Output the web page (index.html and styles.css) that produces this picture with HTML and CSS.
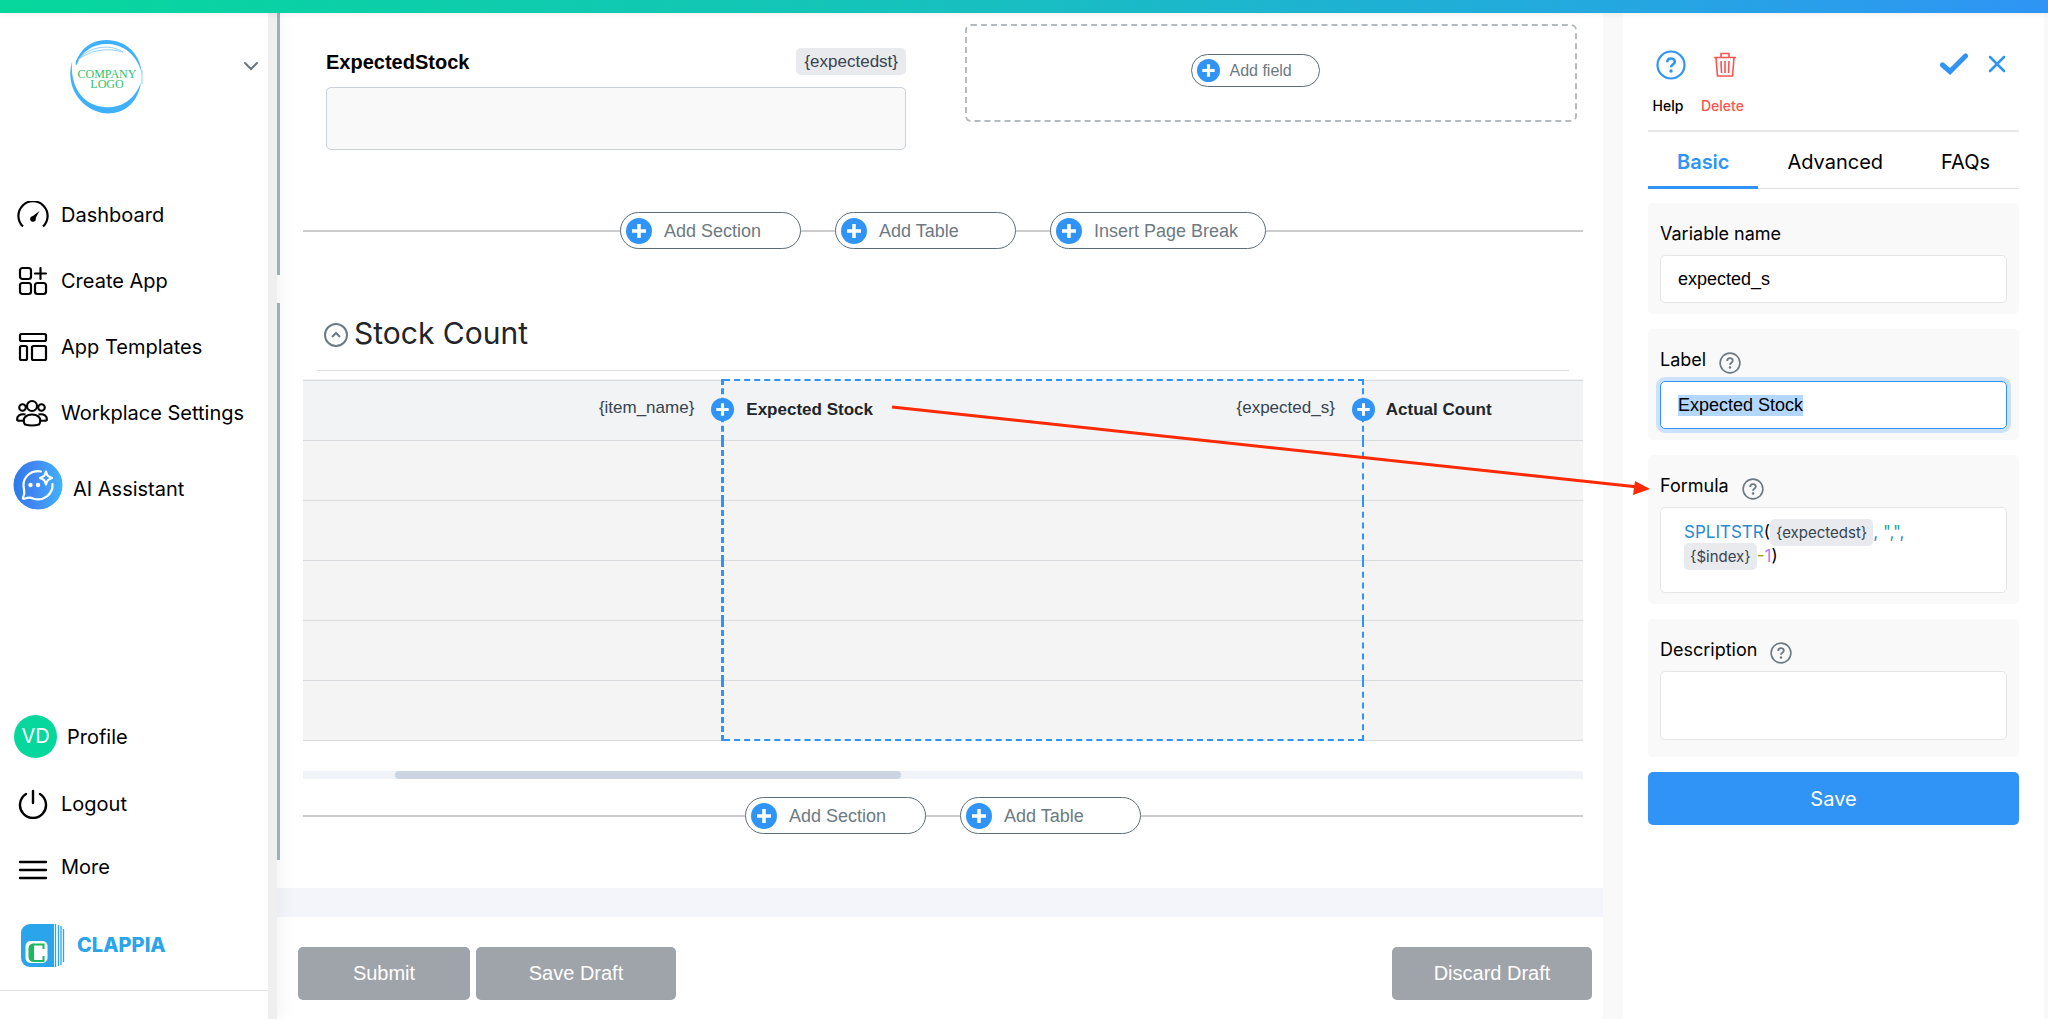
FILE: index.html
```html
<!DOCTYPE html>
<html lang="en">
<head>
    <meta charset="UTF-8">
    <meta name="viewport" content="width=device-width, initial-scale=1.0">
    <title>Clappia - Design App</title>
    <link rel="stylesheet" href="styles.css">
</head>
<body>
    <!-- shared icons -->
    <svg class="sprite" aria-hidden="true">
        <symbol id="plus" viewBox="0 0 26 26">
            <circle cx="13" cy="13" r="13" fill="#2f94f5"/>
            <path d="M13 6v14M6 13h14" stroke="#fff" stroke-width="3.500"/>
        </symbol>
        <symbol id="help" viewBox="0 0 30 30">
            <circle cx="15" cy="15" r="13.5" fill="none" stroke="currentColor" stroke-width="2.200"/>
            <path d="M11.2 12.2c0-5 7.6-4.9 7.6-.5 0 2.8-3.8 2.9-3.8 5.6" fill="none" stroke="currentColor" stroke-width="2.500"/>
            <circle cx="15" cy="21" r="1.7" fill="currentColor"/>
        </symbol>
    </svg>

    <div class="topbar"></div>
    <div class="layout">
        <aside class="sidebar">
            <div class="workplace">
                <svg class="company-logo" width="74" height="74" viewBox="0 0 74 74">
                    <path d="M37 0C58 0 72 15 73 35C70 18 57 5 40 4C25 3 13 11 8 24C7 26 6 25 7 21C12 9 22 0 37 0Z" fill="#3fb1fc"/>
                    <path d="M3 22C-3 42 7 67 33 73C52 76 69 65 72 42C66 60 51 69 35 67C14 65 1 47 3 22Z" fill="#3fb1fc"/>
                    <path d="M9 20C19 7 40 3 54 12C39 8 22 9 9 20ZM73 30v14" fill="none" stroke="#8fd0fc"/>
                    <text x="38" y="38" text-anchor="middle">COMPANY</text>
                    <text x="38" y="48" text-anchor="middle">LOGO</text>
                </svg>
                <button type="button" class="icon-button" aria-label="Switch workplace">
                    <svg width="16" height="10" viewBox="0 0 16 10"><path d="M2 2l6 6 6-6" fill="none" stroke="#66757f" stroke-width="2" stroke-linecap="round"/></svg>
                </button>
            </div>
            <nav class="menu">
                <a href="#" class="menu-item">
                    <svg width="34" height="28" viewBox="0 0 34 28" fill="none" stroke="#000" stroke-width="2">
                        <path d="M7 25.5A14.6 14.6 0 1 1 27 25.5" stroke-width="2.2"/>
                        <path d="M23.5 10L15.5 16l3 3z" fill="#000" stroke="none"/>
                        <circle cx="17" cy="18" r="2.8" fill="#000" stroke="none"/>
                    </svg>
                    Dashboard
                </a>
                <a href="#" class="menu-item">
                    <svg width="34" height="30" viewBox="0 0 34 30" fill="none" stroke="#000" stroke-width="2.2" stroke-linecap="round">
                        <rect x="4" y="2" width="11" height="11" rx="2.5"/>
                        <rect x="4" y="17" width="11" height="11" rx="2.5"/>
                        <rect x="19" y="17" width="11" height="11" rx="2.5"/>
                        <path d="M24.500 2v11M19 7.500h11"/>
                    </svg>
                    Create App
                </a>
                <a href="#" class="menu-item">
                    <svg width="34" height="30" viewBox="0 0 34 30" fill="none" stroke="#000" stroke-width="2.2">
                        <rect x="4" y="2" width="26" height="7" rx="1.500"/>
                        <rect x="4" y="14" width="7" height="14" rx="1.500"/>
                        <rect x="16" y="14" width="14" height="14" rx="1.500"/>
                    </svg>
                    App Templates
                </a>
                <a href="#" class="menu-item">
                    <svg width="34" height="28" viewBox="0 0 34 28" fill="none" stroke="#000" stroke-width="2.1">
                        <circle cx="16" cy="7" r="5"/>
                        <circle cx="6.500" cy="8.500" r="3.300"/>
                        <circle cx="25.500" cy="8.500" r="3.300"/>
                        <path d="M9 25.500C5 19 11 15.500 16 15.500S27 19 23 25.500Q16 27.500 9 25.500Z"/>
                        <path d="M8.500 21.500C5 22 2 22 1.200 21C.5 17 4 14.500 9.500 15.500M23.500 21.500C27 22 30 22 30.800 21C31.500 17 28 14.500 22.500 15.500"/>
                    </svg>
                    Workplace Settings
                </a>
                <a href="#" class="menu-item assistant">
                    <svg width="50" height="50" viewBox="0 0 50 50" fill="none" stroke="#fff" stroke-width="2.2" stroke-linejoin="round" stroke-linecap="round">
                        <defs><linearGradient id="ai"><stop offset="0" stop-color="#2c7ae8"/><stop offset=".4" stop-color="#4287f3"/><stop offset="1" stop-color="#40b3fb"/></linearGradient></defs>
                        <circle cx="25" cy="25" r="24.500" fill="url(#ai)" stroke="none"/>
                        <path d="M28 11.500C18 9.500 10.500 17 10.500 25C10.500 31 13 32 10 37.500C9.500 39 11 39 12 38.500C15 37.500 17 37 20 38.500C30 42 40.500 34 39.500 24"/>
                        <path d="M33 11.500c1 4 2 5 6 6.500c-4 1.500-5 2.500-6 6.500c-1-4-2-5-6-6.500c4-1.500 5-2.500 6-6.500z"/>
                        <circle cx="17.500" cy="25" r="2.200" fill="#fff" stroke="none"/>
                        <circle cx="25" cy="25" r="2.200" fill="#fff" stroke="none"/>
                    </svg>
                    <span>AI Assistant</span>
                </a>
            </nav>
            <nav class="menu account">
                <a href="#" class="menu-item profile"><span class="avatar">VD</span>Profile</a>
                <a href="#" class="menu-item">
                    <svg width="34" height="30" viewBox="0 0 34 30" fill="none" stroke="#000" stroke-width="2.400" stroke-linecap="round">
                        <path d="M10 5A13 13 0 1 0 24 5M17 2v12"/>
                    </svg>
                    Logout
                </a>
                <a href="#" class="menu-item more">
                    <svg width="34" height="24" viewBox="0 0 34 24" stroke="#000" stroke-width="2.400" stroke-linecap="round"><path d="M4 5h26M4 13h26M4 21h26"/></svg>
                    <span>More</span>
                </a>
            </nav>
            <a href="#" class="brand">
                <svg width="45" height="45" viewBox="0 0 45 45">
                    <path d="M10 1h24v43H10a9 9 0 0 1-9-9V10a9 9 0 0 1 9-9z" fill="#2aa4ea"/>
                    <path d="M35.500 1v43M38.500 2v41M41 3v39M43.500 6v33" stroke="#2aa4ea" stroke-width="1.300"/>
                    <rect x="5.500" y="18" width="22" height="22" rx="5" fill="#fff"/>
                    <path d="M23.500 26v-4.500H13.500q-4 1-4 4v8q0 4 4 4.500h10V33" fill="none" stroke="#1cba60" stroke-width="2"/>
                    <path d="M9 24q0-3 5-3.500v18q-5-.5-5-3.500z" fill="#1cba60"/>
                </svg>
                CLAPPIA
            </a>
        </aside>

        <main class="designer">
            <section class="form-section">
                <div class="fields">
                    <div class="field">
                        <div class="field-head">
                            <label for="expectedst">ExpectedStock</label>
                            <span class="variable">{expectedst}</span>
                        </div>
                        <input type="text" id="expectedst" class="field-input" readonly>
                    </div>
                    <div class="drop-zone">
                        <button type="button" class="pill small"><svg><use href="#plus"/></svg>Add field</button>
                    </div>
                </div>
                <div class="insert-row">
                    <button type="button" class="pill"><svg><use href="#plus"/></svg>Add Section</button>
                    <button type="button" class="pill"><svg><use href="#plus"/></svg>Add Table</button>
                    <button type="button" class="pill"><svg><use href="#plus"/></svg>Insert Page Break</button>
                </div>
            </section>

            <section class="form-section">
                <div class="section-title">
                    <svg width="24" height="24" viewBox="0 0 24 24" fill="none" stroke="#6c7a83" stroke-width="2"><circle cx="12" cy="12" r="11"/><path d="M8 14l4-4 4 4"/></svg>
                    <h2>Stock Count</h2>
                </div>
                <table class="stock-table">
                    <colgroup><col class="col-item"><col class="col-expected"><col></colgroup>
                    <thead>
                        <tr>
                            <th>
                                <div class="column-head"><span class="code">{item_name}</span></div>
                                <button type="button" class="add-column" aria-label="Add column"><svg><use href="#plus"/></svg></button>
                            </th>
                            <th class="selected">
                                <div class="column-head">Expected Stock <span class="code">{expected_s}</span></div>
                                <button type="button" class="add-column" aria-label="Add column"><svg><use href="#plus"/></svg></button>
                            </th>
                            <th><div class="column-head">Actual Count</div></th>
                        </tr>
                    </thead>
                    <tbody>
                        <tr><td></td><td class="selected"></td><td></td></tr>
                        <tr><td></td><td class="selected"></td><td></td></tr>
                        <tr><td></td><td class="selected"></td><td></td></tr>
                        <tr><td></td><td class="selected"></td><td></td></tr>
                        <tr><td></td><td class="selected"></td><td></td></tr>
                    </tbody>
                </table>
                <div class="scroll-track"><div class="scroll-thumb"></div></div>
                <div class="insert-row">
                    <button type="button" class="pill"><svg><use href="#plus"/></svg>Add Section</button>
                    <button type="button" class="pill"><svg><use href="#plus"/></svg>Add Table</button>
                </div>
            </section>

            <div class="band"></div>
            <div class="form-actions">
                <button type="button">Submit</button>
                <button type="button" class="wide">Save Draft</button>
                <button type="button" class="wide discard">Discard Draft</button>
            </div>
        </main>

        <aside class="panel">
            <div class="panel-tools">
                <button type="button" class="tool">
                    <svg width="30" height="30"><use href="#help"/></svg>
                    <span>Help</span>
                </button>
                <button type="button" class="tool delete">
                    <svg width="24" height="30" viewBox="0 0 24 30" fill="none" stroke="currentColor" stroke-width="1.600">
                        <path d="M1 7.500h22M8 7V3.500h8V7M3 8l1.500 18h15L21 8M8 11l.5 12M12 11v12M16 11l-.5 12"/>
                    </svg>
                    <span>Delete</span>
                </button>
                <button type="button" class="icon-button confirm" aria-label="Apply">
                    <svg width="28" height="22" viewBox="0 0 28 22"><path d="M2.500 12l7.500 6.500L25.500 3" fill="none" stroke="#2f94f5" stroke-width="5" stroke-linecap="round"/></svg>
                </button>
                <button type="button" class="icon-button" aria-label="Close">
                    <svg width="18" height="18" viewBox="0 0 18 18"><path d="M2 2l14 14M16 2L2 16" stroke="#2f94f5" stroke-width="2.500" stroke-linecap="round"/></svg>
                </button>
            </div>
            <div class="tabs">
                <button type="button" class="tab active">Basic</button>
                <button type="button" class="tab">Advanced</button>
                <button type="button" class="tab">FAQs</button>
            </div>
            <form class="settings">
                <div class="card">
                    <div class="card-label"><label for="variable">Variable name</label></div>
                    <input type="text" id="variable" value="expected_s">
                </div>
                <div class="card">
                    <div class="card-label"><label for="label">Label</label><svg><use href="#help"/></svg></div>
                    <input type="text" id="label" class="focused" value="Expected Stock">
                </div>
                <div class="card">
                    <div class="card-label"><span id="formula-label">Formula</span><svg><use href="#help"/></svg></div>
                    <div class="formula" role="textbox" aria-labelledby="formula-label"><span class="fn">SPLITSTR</span>(<span class="variable">{expectedst}</span><span class="fn">,</span> <span class="str">","</span><span class="fn">,</span><br><span class="variable">{$index}</span><span class="op">-</span><span class="num">1</span>)</div>
                </div>
                <div class="card tall">
                    <div class="card-label"><label for="description">Description</label><svg><use href="#help"/></svg></div>
                    <textarea id="description"></textarea>
                </div>
                <button type="submit" class="save">Save</button>
            </form>
            <!-- pointer from the selected column to its formula -->
            <svg class="pointer" width="760" height="94" viewBox="0 0 760 94">
                <path d="M2 6L748 86" stroke="#ff2a05" stroke-width="3"/>
                <path d="M760 88l-15-8-2 14z" fill="#ff2a05"/>
            </svg>
        </aside>
    </div>

    <script>
        const labelInput = document.getElementById('label');
        labelInput.focus();
        labelInput.select();
    </script>
</body>
</html>
```
FILE: styles.css
```css
* {
    box-sizing: border-box;
}

body {
    margin: 0;
    min-height: 100vh;
    display: flex;
    flex-direction: column;
    font-family: 'Inter', sans-serif;
    font-size: 20px;
    color: #000;
    background-color: #f9f9f9;
}

button {
    font-family: inherit;
    cursor: pointer;
}

.sprite {
    position: absolute;
    width: 0;
    height: 0;
}

.topbar {
    position: relative;
    z-index: 3;
    height: 13px;
    background: linear-gradient(to right, #06d79c, #14c5b8 40%, #22abdc 75%, #2f94f5);
    box-shadow: 0 1px 6px rgba(0, 0, 0, 0.08);
}

.layout {
    flex: 1;
    display: flex;
}

.icon-button {
    display: flex;
    padding: 0;
    border: none;
    background: none;
}

/* sidebar */
.sidebar {
    position: relative;
    z-index: 2;
    flex: none;
    width: 277px;
    background-color: #fff;
    border-right: 9px solid #efefef;
    box-shadow: 2px 0 18px rgba(0, 0, 0, 0.06);
}

.workplace {
    display: flex;
    justify-content: space-between;
    height: 169px;
    padding: 27px 9px 0 69px;
}

.workplace .icon-button {
    height: 10px;
    margin-top: 21px;
}

.company-logo text {
    font-family: 'Liberation Serif', serif;
    font-size: 12px;
    fill: #2fc26b;
}

.menu {
    display: flex;
    flex-direction: column;
}

.menu-item {
    display: flex;
    align-items: center;
    gap: 11px;
    height: 66px;
    padding-left: 16px;
    color: #000;
    text-decoration: none;
}

.assistant {
    gap: 10px;
    height: 78px;
    padding-left: 13px;
}

.assistant span {
    padding-top: 7px;
}

.account {
    margin-top: 178px;
}

.profile {
    gap: 10px;
    height: 69px;
    padding-left: 14px;
}

.more {
    height: 63px;
}

.more span {
    padding-bottom: 4px;
}

.avatar {
    width: 43px;
    height: 43px;
    border-radius: 50%;
    background-color: #06d79c;
    color: #fff;
    line-height: 43px;
    text-align: center;
}

.brand {
    display: flex;
    align-items: center;
    gap: 12px;
    height: 91px;
    padding-left: 20px;
    border-bottom: 1px solid #e2e2e2;
    color: #2aa4ea;
    font-weight: 800;
    text-decoration: none;
}

/* form designer */
.designer {
    flex: 1;
    min-width: 0;
    background-color: #fff;
    font-family: 'Liberation Sans', sans-serif;
}

.form-section {
    margin-bottom: 28px;
    padding: 0 20px 26px 23px;
    border-left: 3px solid #a3b5bc;
}

.fields {
    display: grid;
    grid-template-columns: 580fr 612fr;
    gap: 59px;
    padding: 11px 6px 0 23px;
}

.field {
    padding-top: 24px;
}

.field-head {
    display: flex;
    justify-content: space-between;
    align-items: center;
    height: 27px;
    margin-bottom: 12px;
    font-weight: bold;
}

.field-head label {
    padding-top: 2px;
}

.variable {
    padding: 0 8px;
    border-radius: 5px;
    background-color: #e9eaee;
    color: #37444f;
    font-size: 17px;
    font-weight: normal;
    line-height: 27px;
}

.field-input {
    display: block;
    width: 100%;
    height: 63px;
    border: 1px solid #cbd2da;
    border-radius: 5px;
    background-color: #f9f9f9;
}

.drop-zone {
    display: flex;
    justify-content: center;
    align-items: center;
    height: 98px;
    padding: 0 32px 6px 0;
    border: 2px dashed #b4babd;
    border-radius: 6px;
}

.insert-row {
    display: flex;
    justify-content: center;
    gap: 34px;
    margin-top: 62px;
    background: linear-gradient(#ccc, #ccc) center / 100% 2px no-repeat;
}

.pill {
    display: flex;
    align-items: center;
    gap: 12px;
    min-width: 181px;
    height: 37px;
    padding: 1px 27px 0 5px;
    border: 1px solid #5f6d76;
    border-radius: 19px;
    background-color: #fff;
    color: #6c7a83;
    font-size: 18px;
}

.pill svg {
    width: 26px;
    height: 26px;
}

.pill.small {
    gap: 10px;
    min-width: 129px;
    height: 33px;
    padding-right: 26px;
    font-size: 16px;
}

.pill.small svg {
    width: 23px;
    height: 23px;
}

.section-title {
    display: flex;
    align-items: center;
    gap: 6px;
    height: 68px;
    margin: 0 14px 8px;
    padding: 0 7px 4px;
    border-bottom: 1px solid #e2e2e2;
}

.section-title h2 {
    margin: 0;
    padding-bottom: 4px;
    font-family: 'Inter', sans-serif;
    font-size: 30px;
    font-weight: normal;
    color: #212529;
}

.stock-table {
    width: 100%;
    table-layout: fixed;
    border-collapse: collapse;
    background-color: #f4f4f4;
}

.col-item {
    width: 32.8%;
}

.col-expected {
    width: 50%;
}

.stock-table tr {
    height: 60px;
}

.stock-table th,
.stock-table td {
    padding: 0;
    border-top: 1px solid #d8dade;
    border-bottom: 1px solid #d8dade;
}

.stock-table th {
    position: relative;
    background-color: #f1f3f5;
    color: #212529;
    font-size: 17px;
}

.stock-table .selected {
    border-left: 3px dashed #2f94f5;
    border-right: 2px dashed #2f94f5;
}

.stock-table th.selected {
    border-top: 2px dashed #2f94f5;
}

.stock-table tr:last-child td.selected {
    border-bottom: 2px dashed #2f94f5;
}

.column-head {
    display: flex;
    justify-content: space-between;
    align-items: center;
    padding: 0 27px 0 22px;
}

.code {
    margin-left: auto;
    padding-bottom: 4px;
    color: #37444f;
    font-weight: normal;
}

.add-column {
    position: absolute;
    top: 17px;
    right: -13px;
    z-index: 1;
    display: flex;
    padding: 0;
    border: none;
    background: none;
}

.add-column svg {
    width: 23px;
    height: 23px;
}

.scroll-track {
    height: 8px;
    margin-top: 30px;
    background-color: #f0f4f9;
}

.scroll-thumb {
    width: 506px;
    height: 8px;
    margin-left: 92px;
    border-radius: 4px;
    background-color: #cbd5e1;
}

.scroll-track + .insert-row {
    margin-top: 18px;
}

.band {
    height: 29px;
    background-color: #f4f5fa;
}

.form-actions {
    display: flex;
    gap: 6px;
    padding: 30px 11px 18px 21px;
}

.form-actions button {
    width: 172px;
    height: 53px;
    border: none;
    border-radius: 5px;
    background-color: #9fa3aa;
    color: #fff;
    font-size: 20px;
}

.form-actions .wide {
    width: 200px;
}

.form-actions .discard {
    margin-left: auto;
}

/* settings panel */
.panel {
    position: relative;
    flex: none;
    width: 421px;
    margin: 0 4px 0 20px;
    padding: 0 25px;
    background-color: #fff;
}

.panel-tools {
    display: flex;
    gap: 15px;
    height: 119px;
    padding: 37px 13px 0 2px;
    border-bottom: 2px solid #e8e8e8;
}

.panel-tools .icon-button {
    align-items: center;
    height: 28px;
}

.panel-tools .confirm {
    margin-left: auto;
    margin-right: 5px;
}

.tool {
    display: flex;
    flex-direction: column;
    align-items: center;
    gap: 17px;
    height: 70px;
    padding: 0;
    border: none;
    background: none;
    font-size: 14px;
    font-weight: 500;
}

.tool svg {
    margin-left: 6px;
    color: #2f94f5;
}

.tool.delete,
.tool.delete svg {
    color: #f9544f;
}

.tabs {
    display: flex;
    height: 57px;
    border-bottom: 1px solid #dedfe1;
}

.tab {
    flex: auto;
    height: 57px;
    padding: 5px 28px 0;
    border: none;
    border-bottom: 3px solid transparent;
    background: none;
    font-size: 20px;
}

.tab.active {
    border-color: #2f94f5;
    color: #2f94f5;
    font-weight: 600;
}

.settings {
    display: flex;
    flex-direction: column;
    gap: 15px;
    padding-top: 14px;
}

.card {
    padding: 12px 12px 11px;
    border-radius: 5px;
    background-color: #f9f9f9;
}

.card.tall {
    padding-bottom: 17px;
}

.card-label {
    display: flex;
    align-items: center;
    gap: 13px;
    height: 39px;
    margin-bottom: 1px;
    padding-bottom: 2px;
    font-size: 18px;
}

.card-label svg {
    width: 22px;
    height: 22px;
    margin-top: 6px;
    color: #6c7a83;
}

.card input,
.card textarea,
.formula {
    display: block;
    width: 100%;
    height: 48px;
    padding: 0 17px;
    border: 1px solid #e4e5e7;
    border-radius: 5px;
    background-color: #fff;
    font-family: 'Liberation Sans', sans-serif;
    font-size: 18px;
    outline: none;
    resize: none;
}

.card .focused {
    border-color: #2f94f5;
    box-shadow: 0 0 0 4px #cbe2fa;
}

.card input::selection {
    background-color: #b3d7ff;
    color: #000;
}

.card textarea {
    height: 69px;
}

.card .formula {
    height: 86px;
    padding: 12px 23px;
    font-family: 'Inter', sans-serif;
    font-size: 17px;
    line-height: 24px;
}

.formula .variable {
    padding: 4px 6px;
    font-size: 15px;
    line-height: 20px;
}

.fn {
    color: #268bd2;
}

.str {
    color: #2aa198;
}

.op {
    color: #8fa516;
}

.num {
    color: #b57bf5;
}

.save {
    height: 53px;
    border: none;
    border-radius: 5px;
    background-color: #2f94f5;
    color: #fff;
    font-size: 20px;
}

.pointer {
    position: absolute;
    top: 388px;
    right: 394px;
    pointer-events: none;
}
```
